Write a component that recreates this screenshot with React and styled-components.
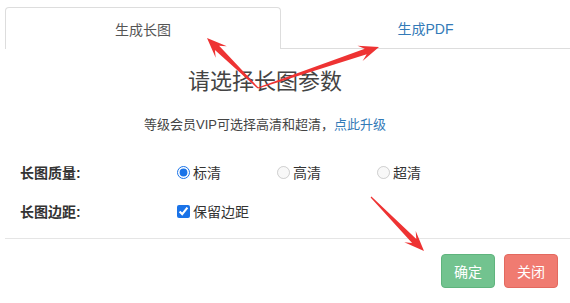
import React from 'react'
import styled, { createGlobalStyle } from 'styled-components'

const GlobalStyle = createGlobalStyle`
	html, body {
		margin: 0;
		padding: 0;
		background: #fff;
	}
	body {
		font-family: "Liberation Sans", "Noto Sans CJK SC", sans-serif;
		color: #333;
	}
`

const Page = styled.div`
	position: relative;
	width: 570px;
	height: 303px;
	overflow: hidden;
	background: #fff;
`

const TabBar = styled.div`
	display: flex;
	padding: 7px 0 0 5px;
`

const Tab = styled.div`
	box-sizing: border-box;
	height: 42px;
	display: flex;
	align-items: center;
	justify-content: center;
	font-size: 14px;
	${({ active }) =>
		active
			? `
		width: 276px;
		color: #555;
		border: 1px solid #ddd;
		border-bottom: none;
		border-radius: 4px 4px 0 0;
	`
			: `
		flex: 1;
		color: #337ab7;
		border-bottom: 1px solid #ddd;
	`}
`

const Intro = styled.div`
	width: 520px;
	margin-left: 5px;
	text-align: center;
`

const Title = styled.h2`
	margin: 18px 0 0;
	font-size: 22px;
	line-height: 30px;
	font-weight: normal;
	color: #444;
`

const Notice = styled.p`
	margin: 18px 0 0;
	font-size: 13px;
	line-height: 20px;
	color: #444;
`

const Link = styled.a`
	color: #337ab7;
	text-decoration: none;
`

const Form = styled.div`
	padding: 27px 0 0 20px;
	display: grid;
	row-gap: 19px;
`

const Row = styled.div`
	display: flex;
	align-items: center;
	height: 20px;
	font-size: 14px;
`

const Label = styled.span`
	width: 157px;
	font-weight: bold;
	color: #333;
`

const Option = styled.label`
	width: 100px;
	display: flex;
	align-items: center;
	gap: 3px;
	color: #333;
`

const Input = styled.input`
	margin: 0;
	width: 13px;
	height: 13px;
	accent-color: #1a73e8;
`

const Divider = styled.div`
	margin: 17px 0 0 5px;
	height: 1px;
	background: #e5e5e5;
`

const Footer = styled.div`
	display: flex;
	justify-content: flex-end;
	gap: 9px;
	padding: 15px 12px 0 0;
`

const Button = styled.button`
	box-sizing: border-box;
	width: 54px;
	height: 34px;
	border-radius: 4px;
	font-family: inherit;
	font-size: 14px;
	color: #fff;
	padding: 0;
	border: 1px solid ${({ tone }) => (tone === 'ok' ? '#5fb47d' : '#e3695f')};
	background: ${({ tone }) => (tone === 'ok' ? '#72c38f' : '#f07b71')};
`

const Overlay = styled.svg`
	position: absolute;
	left: 0;
	top: 0;
	pointer-events: none;
`

const arrowPoints = ([x1, y1], [x2, y2]) => {
	const len = Math.hypot(x2 - x1, y2 - y1)
	const dx = (x2 - x1) / len
	const dy = (y2 - y1) / len
	const nx = -dy
	const ny = dx
	const head = 20
	const pt = (d, w) => `${(x2 - dx * d + nx * w).toFixed(1)},${(y2 - dy * d + ny * w).toFixed(1)}`
	return [
		pt(len, 0.6),
		pt(head * 0.7, 3),
		pt(head, 8),
		pt(0, 0),
		pt(head, -8),
		pt(head * 0.7, -3),
		pt(len, -0.6),
	].join(' ')
}

const arrows = [
	[[258, 88], [207, 38]],
	[[258, 88], [379, 47]],
	[[371, 197], [424, 251]],
]

export default function App() {
	return (
		<Page>
			<GlobalStyle />
			<TabBar>
				<Tab active>生成长图</Tab>
				<Tab>生成PDF</Tab>
			</TabBar>
			<Intro>
				<Title>请选择长图参数</Title>
				<Notice>
					等级会员VIP可选择高清和超清，<Link href="#">点此升级</Link>
				</Notice>
			</Intro>
			<Form>
				<Row>
					<Label>长图质量:</Label>
					<Option>
						<Input type="radio" name="quality" defaultChecked />
						标清
					</Option>
					<Option>
						<Input type="radio" name="quality" disabled />
						高清
					</Option>
					<Option>
						<Input type="radio" name="quality" disabled />
						超清
					</Option>
				</Row>
				<Row>
					<Label>长图边距:</Label>
					<Option>
						<Input type="checkbox" defaultChecked />
						保留边距
					</Option>
				</Row>
			</Form>
			<Divider />
			<Footer>
				<Button tone="ok">确定</Button>
				<Button tone="close">关闭</Button>
			</Footer>
			<Overlay width="570" height="303">
				{arrows.map(([from, to], i) => (
					<polygon key={i} points={arrowPoints(from, to)} fill="#ee3333" />
				))}
			</Overlay>
		</Page>
	)
}
